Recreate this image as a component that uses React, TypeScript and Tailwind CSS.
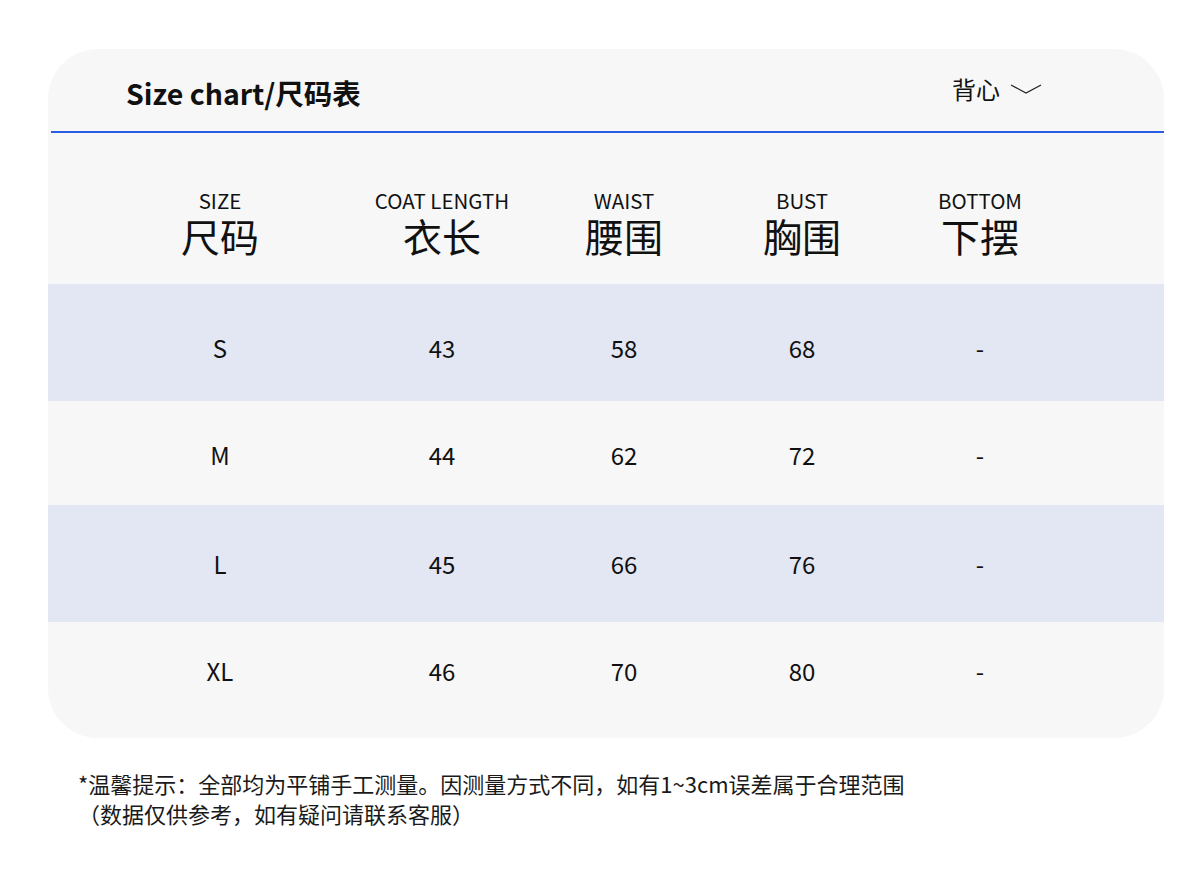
import React from 'react';

const cols = ['w-[180px]', 'w-[264px]', 'w-[100px]', 'w-[256px]', 'w-[100px]'];

const heads = [
  { en: 'SIZE', zh: '尺码' },
  { en: 'COAT LENGTH', zh: '衣长' },
  { en: 'WAIST', zh: '腰围' },
  { en: 'BUST', zh: '胸围' },
  { en: 'BOTTOM', zh: '下摆' },
];

// row heights + text offsets taken from the reference
const rows = [
  { cells: ['S', '43', '58', '68', '-'], box: 'h-[117px] pt-[52px] bg-[#e3e7f3]' },
  { cells: ['M', '44', '62', '72', '-'], box: 'h-[104px] pt-[42px]' },
  { cells: ['L', '45', '66', '76', '-'], box: 'h-[117px] pt-[47px] bg-[#e3e7f3]' },
  { cells: ['XL', '46', '70', '80', '-'], box: 'h-[116px] pt-[37px]' },
];

const font = "font-['Noto_Sans_CJK_SC','Noto_Sans',sans-serif]";

export default function App() {
  return (
    <div className={`w-[1200px] h-[869px] bg-white ${font} text-[#111]`}>
      <div className="pt-[49px] pl-[48px]">
        {/* Card */}
        <div className="w-[1116px] bg-[#f7f7f7] rounded-[50px] overflow-hidden">
          {/* Header */}
          <div className="h-[82px] flex items-center justify-between pl-[78px] pr-[122px] pt-[6px]">
            <h1 className="text-[28.5px] font-bold leading-none">Size chart/尺码表</h1>
            <div className="flex items-center gap-[10px] -mt-[8px]">
              <span className="text-[24px] leading-none">背心</span>
              <svg width="32" height="12" viewBox="0 0 32 12" fill="none" stroke="#222" strokeWidth="1.2">
                <path d="M1 2 L16 10 L31 2" />
              </svg>
            </div>
          </div>
          <div className="h-[2px] ml-[3px] bg-[#2b5ce6]" />

          {/* Column heads */}
          <div className="h-[151px] flex pl-[82px] pt-[57px]">
            {heads.map((c, i) => (
              <div key={c.en} className={`${cols[i]} flex flex-col items-center`}>
                <span className="block text-[20.5px] leading-none">{c.en}</span>
                <span className="block text-[39px] leading-none mt-[5px]">{c.zh}</span>
              </div>
            ))}
          </div>

          {/* Rows */}
          {rows.map((r, ri) => (
            <div key={ri} className={`${r.box} flex pl-[82px]`}>
              {r.cells.map((v, i) => (
                <div key={i} className={`${cols[i]} text-center text-[24px] leading-none`}>
                  {v}
                </div>
              ))}
            </div>
          ))}
        </div>

        {/* Footnote */}
        <div className="mt-[30px] pl-[30px] text-[22px] leading-[30px] text-[#1a1a1a]">
          <p>*温馨提示：全部均为平铺手工测量。因测量方式不同，如有1~3cm误差属于合理范围</p>
          <p>（数据仅供参考，如有疑问请联系客服）</p>
        </div>
      </div>
    </div>
  );
}
